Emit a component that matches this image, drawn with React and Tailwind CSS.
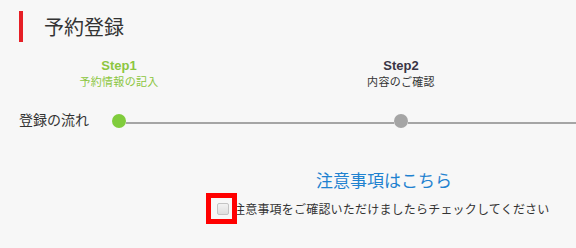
import React from "react";

const steps = [
  { title: "Step1", sub: "予約情報の記入", active: true },
  { title: "Step2", sub: "内容のご確認", active: false },
];

export default function App() {
  return (
    <div className="relative w-full h-[248px] overflow-hidden bg-[#f7f7f7] font-['Liberation_Sans','Noto_Sans_CJK_JP',sans-serif] text-[#333]">
      <div className="flex items-center pt-[11px] pl-[19px]">
        <div className="w-[4px] h-[31px] bg-[#e61f26]" />
        <h1 className="ml-[21px] text-[20px] leading-[31px] font-normal font-['Noto_Sans_CJK_JP',sans-serif]">
          予約登録
        </h1>
      </div>

      <div className="flex gap-[200px] pl-[78px] mt-[16px]">
        {steps.map((s) => (
          <div key={s.title} className="w-[82px] text-center">
            <p
              className={`text-[13px] leading-[16px] font-bold ${
                s.active ? "text-[#8cc63f]" : "text-[#3a3545]"
              }`}
            >
              {s.title}
            </p>
            <p
              className={`text-[11px] leading-[14px] tracking-[0.3px] whitespace-nowrap font-['Noto_Sans_CJK_JP',sans-serif] ${
                s.active ? "text-[#8cc63f]" : "text-[#333]"
              }`}
            >
              {s.sub}
            </p>
          </div>
        ))}
      </div>

      <div className="flex items-center h-[20px] mt-[23px] pl-[19px]">
        <span className="w-[93px] mb-[5px] text-[14px] leading-[20px] font-['Noto_Sans_CJK_JP',sans-serif]">
          登録の流れ
        </span>
        <span className="w-[14px] h-[14px] rounded-full bg-[#80cc3c] shrink-0" />
        <span className="w-[268px] h-[2px] mt-[3px] bg-[#a5a5a5] shrink-0" />
        <span className="w-[14px] h-[14px] rounded-full bg-[#a5a5a5] shrink-0" />
        <span className="flex-1 h-[2px] mt-[3px] bg-[#a5a5a5]" />
      </div>

      <div className="pl-[192px] mt-[37px]">
        <p className="text-center text-[17px] leading-[24px] text-[#1f82d0] font-['Noto_Sans_CJK_JP',sans-serif]">
          注意事項はこちら
        </p>
        <div className="flex items-center h-[20px] mt-[7px] pl-[25px]">
          <span className="relative w-[12px] h-[12px] shrink-0 rounded-[2px] border border-[#c4c4c4] bg-gradient-to-b from-[#f2f2f2] to-[#dedede]">
            <span className="absolute left-[-12px] top-[-11px] w-[31px] h-[31px] border-[5px] border-[#ff0000]" />
          </span>
          <span className="ml-[4px] text-[12px] tracking-[0.2px] leading-[20px] whitespace-nowrap font-['Noto_Sans_CJK_JP',sans-serif]">
            注意事項をご確認いただけましたらチェックしてください
          </span>
        </div>
      </div>
    </div>
  );
}
